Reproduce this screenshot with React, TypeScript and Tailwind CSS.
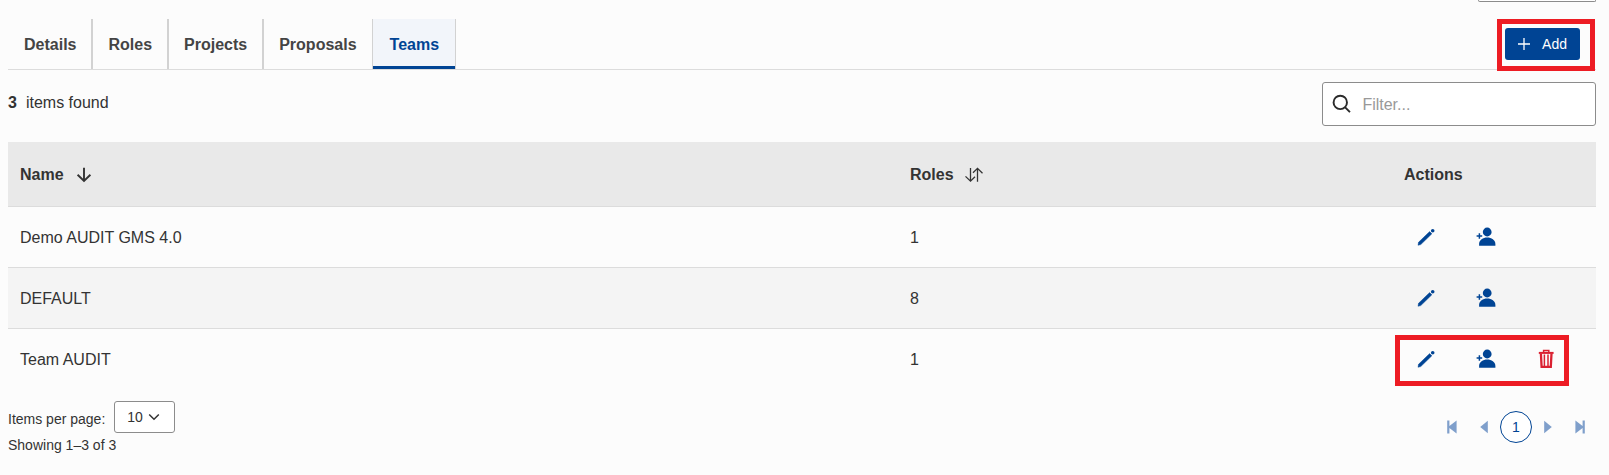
import { useId } from "react";

type Team = { name: string; roles: number; removable?: boolean };

const tabs = ["Details", "Roles", "Projects", "Proposals"];

const teams: Team[] = [
  { name: "Demo AUDIT GMS 4.0", roles: 1 },
  { name: "DEFAULT", roles: 8 },
  { name: "Team AUDIT", roles: 1, removable: true },
];

function PencilIcon() {
  return (
    <svg width="20" height="20" viewBox="0 0 20 20" aria-hidden="true">
      <path d="M2 18.3 2.5 15.3 13.6 4.6 15.9 6.8 4.8 17.6Z" fill="currentColor" stroke="currentColor" strokeWidth="0.4" strokeLinejoin="round" />
      <circle cx="16.7" cy="3.8" r="1.8" fill="currentColor" />
    </svg>
  );
}

function PersonAddIcon() {
  return (
    <svg width="20" height="20" viewBox="0 0 20 20" aria-hidden="true">
      <circle cx="11.2" cy="5" r="4.4" fill="currentColor" />
      <path d="M3.1 18.8V17C3.1 12.8 7 10.4 11.2 10.4S19.4 12.8 19.4 17V18.8Z" fill="currentColor" />
      <path d="M3.4 6.2V11.8M.6 9H6.2" stroke="currentColor" strokeWidth="1.5" />
    </svg>
  );
}

function TrashIcon() {
  return (
    <svg width="20" height="20" viewBox="0 0 20 20" fill="none" stroke="currentColor" aria-hidden="true">
      <path d="M2.8 3.9H17.6" strokeWidth="2" />
      <path d="M7.6 3.5V1.6H12.8V3.5" strokeWidth="1.5" />
      <path d="M4.9 4.5 5.6 17.8H14.8L15.5 4.5" strokeWidth="2.3" />
      <path d="M8.4 5.5V17M12 5.5V17" strokeWidth="1.5" />
    </svg>
  );
}

function PageArrow({ bar, flip, label }: { bar?: boolean; flip?: boolean; label: string }) {
  return (
    <button type="button" aria-label={label} className="flex size-8 items-center justify-center text-[#7f9fcb]">
      <svg width="16" height="16" viewBox="0 0 16 16" fill="currentColor" className={flip ? "rotate-180" : ""} aria-hidden="true">
        {bar ? <path d="M3.2 1.5H5.4V7L12.6 1.5V14.5L5.4 9V14.5H3.2Z" /> : <path d="M4.2 8 11.8 1.7V14.3Z" />}
      </svg>
    </button>
  );
}

export default function App() {
  const sizeId = useId();

  return (
    <main className="min-h-screen bg-[#fcfcfc] pr-[13px] pl-2 font-['Liberation_Sans',Arial,sans-serif] text-base text-[#333]">
      <div className="flex h-[19px] items-start justify-end">
        <div className="h-0.5 w-[118px] rounded-b-[3px] border border-t-0 border-[#8c8c8c] bg-white" />
      </div>

      <div className="flex items-stretch justify-between border-b border-[#dcdcdc]">
        <nav className="flex font-bold">
          {tabs.map((tab) => (
            <a
              key={tab}
              href="#"
              className="flex h-[50px] items-center border-x border-[#d2d2d2] px-[15px] pt-0.5 text-[#444] first:border-l-0 first:pl-4"
            >
              {tab}
            </a>
          ))}
          <a
            href="#"
            aria-current="page"
            className="flex h-[50px] items-center border-r border-[#d2d2d2] bg-[#f2f5fa] pt-0.5 pr-4 pl-[17px] text-[#004494] shadow-[inset_0_-3px_0_#004494]"
          >
            Teams
          </a>
        </nav>
        <div className="flex items-center pr-4">
          <div className="relative">
            <button type="button" className="flex h-8 items-center gap-[11px] rounded-[3px] bg-[#004494] pr-[13px] pl-3 text-sm text-white">
              <svg width="14" height="14" viewBox="0 0 14 14" stroke="currentColor" strokeWidth="1.3" aria-hidden="true">
                <path d="M7 1V13M1 7H13" />
              </svg>
              Add
            </button>
            <div className="pointer-events-none absolute -top-[9px] -right-[15px] -bottom-[11px] -left-2 border-[5px] border-[#ed1c24]" />
          </div>
        </div>
      </div>

      <div className="flex items-start justify-between pt-3 pb-4">
        <p className="pt-[9px] leading-6">
          <strong className="mr-[9px]">3</strong>
          items found
        </p>
        <label className="flex h-11 w-[274px] items-center gap-[11px] rounded-[3px] border border-[#8c8c8c] bg-white pr-2 pl-[9px]">
          <svg width="22" height="22" viewBox="0 0 22 22" fill="none" stroke="#2b2b2b" strokeWidth="2.2" aria-hidden="true">
            <circle cx="9.4" cy="9.2" r="7.6" />
            <path d="M14.7 14.6 20.4 20.2" />
          </svg>
          <input type="text" aria-label="Filter" placeholder="Filter..." className="w-full min-w-0 bg-transparent pt-0.5 outline-none placeholder:text-[#999]" />
        </label>
      </div>

      <table className="w-full table-fixed border-collapse text-left">
        <thead>
          <tr className="h-16 border-b border-[#dcdcdc] bg-[#e9e9e9]">
            <th className="px-3 pt-0.5">
              <span className="flex items-center gap-[11px]">
                Name
                <svg width="18" height="18" viewBox="0 0 18 18" fill="none" stroke="currentColor" strokeWidth="1.9" aria-hidden="true">
                  <path d="M9 1.8V15M2.6 8.8 9 15 15.4 8.8" />
                </svg>
              </span>
            </th>
            <th className="w-[494px] px-3 pt-0.5">
              <span className="flex items-center gap-2.5">
                Roles
                <svg width="20" height="18" viewBox="0 0 20 18" fill="none" stroke="currentColor" strokeWidth="1.3" aria-hidden="true">
                  <path d="M6.5 2V15.2M1.5 10.4 6.5 15.2 11 10.8M13.5 15.8V2.4M9 6.8 13.5 2.4 18.5 7.2" />
                </svg>
              </span>
            </th>
            <th className="w-[204px] px-3 pt-0.5">Actions</th>
          </tr>
        </thead>
        <tbody>
          {teams.map((team) => (
            <tr key={team.name} className="h-[61px] border-b border-[#dcdcdc] last:border-b-0 even:bg-[#f4f4f4]">
              <td className="px-3 pt-0.5">{team.name}</td>
              <td className="px-3 pt-0.5">{team.roles}</td>
              <td className="pl-1">
                <div className="relative flex w-max text-[#004494]">
                  <button type="button" aria-label="Edit" className="flex w-[60px] justify-center"><PencilIcon /></button>
                  <button type="button" aria-label="Add member" className="flex w-[60px] justify-center"><PersonAddIcon /></button>
                  {team.removable && (
                    <>
                      <button type="button" aria-label="Delete" className="flex w-[60px] justify-center text-[#da2131]"><TrashIcon /></button>
                      <div className="pointer-events-none absolute -top-3.5 right-[7px] -bottom-[17px] -left-px border-[5px] border-[#ed1c24]" />
                    </>
                  )}
                </div>
              </td>
            </tr>
          ))}
        </tbody>
      </table>

      <footer className="flex items-start justify-between pt-3 text-sm">
        <div>
          <div className="flex items-center gap-[9px]">
            <label htmlFor={sizeId} className="pt-1">Items per page:</label>
            <div className="relative">
              <select id={sizeId} defaultValue="10" className="h-8 w-[61px] appearance-none rounded-[3px] border border-[#8c8c8c] bg-white pl-3 outline-none">
                <option>10</option>
                <option>25</option>
                <option>50</option>
              </select>
              <svg width="12" height="12" viewBox="0 0 12 12" fill="none" stroke="#333" strokeWidth="1.5" className="pointer-events-none absolute top-2.5 right-[15px]" aria-hidden="true">
                <path d="M1.2 3.5 6 8.2 10.8 3.5" />
              </svg>
            </div>
          </div>
          <p className="pt-0.5">Showing 1–3 of 3</p>
        </div>
        <nav aria-label="Pagination" className="flex pt-2.5">
          <PageArrow bar label="First page" />
          <PageArrow label="Previous page" />
          <button type="button" aria-current="page" className="size-8 rounded-full border border-[#004494] bg-white text-[#004494]">1</button>
          <PageArrow flip label="Next page" />
          <PageArrow bar flip label="Last page" />
        </nav>
      </footer>
    </main>
  );
}
